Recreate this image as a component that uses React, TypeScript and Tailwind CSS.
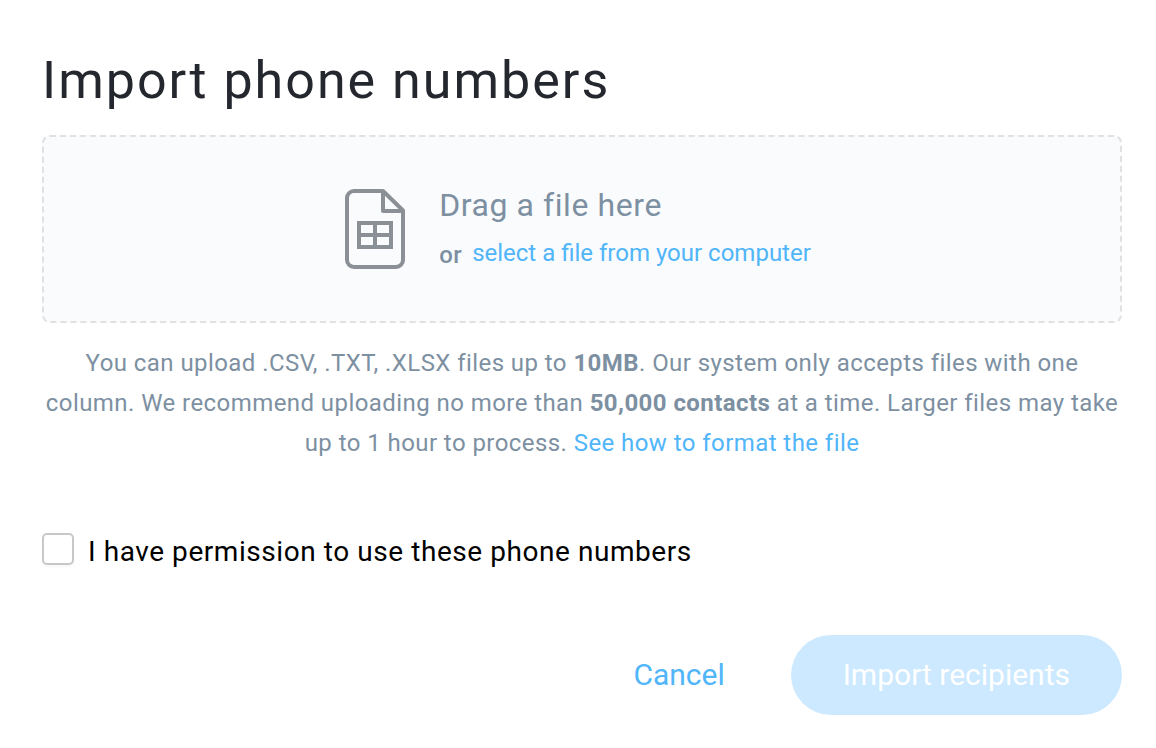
import { useState } from "react";

export default function App() {
  const [allowed, setAllowed] = useState(false);
  return (
    <main className="min-h-screen bg-white pt-[49px] pr-[34px] pb-8 pl-[42px] font-['Roboto',sans-serif]">
      <h1 className="text-[52px] leading-16 tracking-[2px] text-[#24282e]">Import phone numbers</h1>

      <section className="mt-[22px] flex h-[188px] items-center justify-center gap-[34px] rounded-lg border-2 border-dashed border-[#e0e1e2] bg-[#fafbfd] pr-2">
        <svg aria-hidden="true" className="h-20 w-[60px]" viewBox="0 0 60 80" fill="none" stroke="#8b9097" strokeWidth="4">
          <path strokeLinejoin="round" d="M38 2H9a7 7 0 0 0-7 7v62a7 7 0 0 0 7 7h42a7 7 0 0 0 7-7V21.5Z" />
          <path strokeLinejoin="round" d="M38 2v20h20" />
          <path d="M14 34h32v24H14ZM30 34v24M14 46h32" />
        </svg>
        <div className="pt-0.5 text-[#7d90a2]">
          <p className="text-[32px] leading-12 tracking-[0.018em]">Drag a file here</p>
          <p className="flex items-end gap-2.5 text-2xl leading-12">
            <span className="font-medium tracking-[0.018em]">or</span>
            <a href="#select" className="border-b-2 border-transparent text-[#50b5f9]">select a file from your computer</a>
          </p>
        </div>
      </section>

      <p className="mt-5 text-center text-2xl leading-10 tracking-[0.018em] text-[#7d90a2]">
        You can upload .CSV, .TXT, .XLSX files up to <b>10MB</b>. Our system only accepts files with one column. We
        recommend uploading no more than <b>50,000 contacts</b> at a time. Larger files may take up to 1 hour to
        process. <a href="#format" className="text-[#50b5f9]">See how to format the file</a>
      </p>

      <label className="mt-[70px] flex items-start gap-3.5 text-[28px] leading-[38px] tracking-[0.02em] text-black">
        <input
          type="checkbox"
          checked={allowed}
          onChange={(e) => setAllowed(e.target.checked)}
          className="size-8 shrink-0 appearance-none rounded-[5px] border-2 border-[#c8c8c8] bg-white shadow-[0_2px_2px_rgba(0,0,0,0.03)] checked:bg-[#50b5f9]"
        />
        I have permission to use these phone numbers
      </label>

      <div className="mt-16 flex items-center justify-end gap-[66px] text-[30px]">
        <button type="button" className="h-20 pb-0.5 text-[#50b5f9]">Cancel</button>
        <button type="button" disabled={!allowed} className="h-20 rounded-full bg-[#50b5f9] px-[52px] pb-0.5 text-white disabled:bg-[#cce9ff]">
          Import recipients
        </button>
      </div>
    </main>
  );
}
